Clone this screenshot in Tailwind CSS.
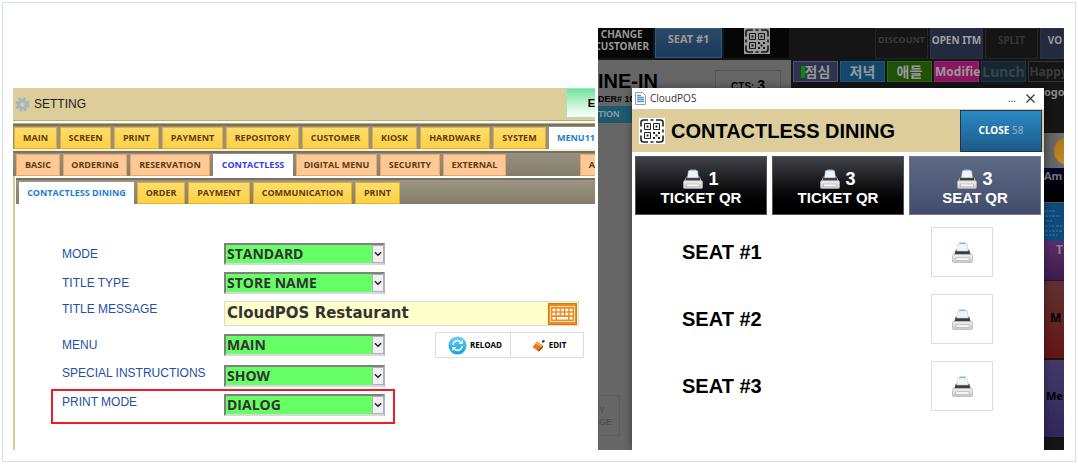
<!DOCTYPE html>
<html lang="en">
<head>
<meta charset="utf-8">
<title>CloudPOS Settings</title>
<script src="https://cdn.jsdelivr.net/npm/@tailwindcss/browser@4"></script>
</head>
<body class="bg-white p-0.5 font-['Liberation_Sans',sans-serif]">
<svg width="0" height="0" class="absolute" aria-hidden="true">
  <defs>
    <linearGradient id="pg" x1="0" y1="0" x2="0" y2="1"><stop offset="0" stop-color="#f2f2f2"/><stop offset="1" stop-color="#c8c8c8"/></linearGradient>
    <linearGradient id="rg" x1="0" y1="0" x2="0" y2="1"><stop offset="0" stop-color="#6fcbee"/><stop offset="1" stop-color="#12a3da"/></linearGradient>
    <symbol id="printer" viewBox="0 0 22 22">
      <path d="M8 .500h6l1.500 2.500h-9z" fill="#7fb6dc"/>
      <path d="M4 8h14l3 6H1z" fill="#d4d4d4"/>
      <path d="M4 8h14l1.300 5H2.700z" fill="#3c3c3c"/>
      <path d="M6 2h10l1 7.500H5z" fill="#eef4fa" stroke="#c3d0dc" stroke-width=".6"/>
      <rect x=".5" y="13" width="21" height="8.500" rx="1.500" fill="url(#pg)" stroke="#b0b0b0" stroke-width=".7"/>
      <rect x="4" y="16.500" width="14" height="3" fill="#f8f8f8" stroke="#b0b0b0" stroke-width=".7"/>
    </symbol>
    <symbol id="qr" viewBox="0 0 26 26">
      <rect width="26" height="26" fill="#fff"/>
      <g fill="none" stroke="#222" stroke-width="1.600">
        <path d="M2 8.500V4.500A2.500 2.500 0 0 1 4.500 2H9M11.500 2h3M17 2h4.500A2.500 2.500 0 0 1 24 4.500V8.500M24 11.500v3M24 17.500v4a2.500 2.500 0 0 1-2.500 2.500H17M14.500 24h-3M9 24H4.500A2.500 2.500 0 0 1 2 21.500V17.500M2 14.500v-3"/>
        <path d="M5.500 5.500h6v6h-6zM14.500 5.500h6v6h-6zM5.500 14.500h6v6h-6z" stroke-width="1"/>
      </g>
      <path d="M7.500 7.500h2v2h-2zM16.500 7.500h2v2h-2zM7.500 16.500h2v2h-2zM14 14h2v2h-2zM19 14h2v2h-2zM16.500 16.500h2v2h-2zM14 19h2v2h-2zM19 19h2v2h-2z" fill="#222"/>
    </symbol>
    <symbol id="chev" viewBox="0 0 9 6"><path d="M1 1l3.500 3.500L8 1" fill="none" stroke="#222" stroke-width="1.600"/></symbol>
  </defs>
</svg>
<main class="grid grid-cols-[582fr_466fr] items-end gap-[3px] border border-[#d5dfe8] pt-[25px] pr-[11px] pb-[11px] pl-[10px]">

  <!-- Settings panel -->
  <section class="overflow-hidden font-['Open_Sans',sans-serif]">
    <header class="flex h-[32px] items-start justify-between bg-[#dccd9a]">
      <h1 class="flex items-center gap-1 pt-2 pl-0.5 font-['Liberation_Sans',sans-serif] text-[12px] leading-4 text-[#222]">
        <svg class="size-[15px]" viewBox="0 0 16 16"><circle cx="8" cy="8" r="5" fill="#a9bcc4" stroke="#93a7b0"/><circle cx="8" cy="8" r="6.500" fill="none" stroke="#a3b6be" stroke-width="2.400" stroke-dasharray="3 2.100"/><circle cx="8" cy="8" r="2" fill="#dccd9a"/></svg>
        SETTING
      </h1>
      <button class="h-[30px] w-[29px] border border-r-0 border-[#9be8bd] bg-linear-to-b from-[#6fe29d] to-white text-right font-['Liberation_Sans',sans-serif] text-[11px] font-bold text-black">E</button>
    </header>
    <div class="h-1 border-y border-[#b5aa85] bg-[#fdfbf0]"></div>

    <nav class="flex h-[25px] gap-[3px] overflow-hidden border-t-2 border-[#77725f] bg-[#979080] pt-px pl-px text-[9px] font-bold text-[#5c3d0c] [&>button]:h-[22px] [&>button]:shrink-0 [&>button]:whitespace-nowrap">
      <button class="w-[43px] border border-[#e0b030] bg-linear-to-b from-[#fddc6c] to-[#fed143]">MAIN</button>
      <button class="w-[51px] border border-[#e0b030] bg-linear-to-b from-[#fddc6c] to-[#fed143]">SCREEN</button>
      <button class="w-[45px] border border-[#e0b030] bg-linear-to-b from-[#fddc6c] to-[#fed143]">PRINT</button>
      <button class="w-[61px] border border-[#e0b030] bg-linear-to-b from-[#fddc6c] to-[#fed143]">PAYMENT</button>
      <button class="w-[73px] border border-[#e0b030] bg-linear-to-b from-[#fddc6c] to-[#fed143]">REPOSITORY</button>
      <button class="w-[67px] border border-[#e0b030] bg-linear-to-b from-[#fddc6c] to-[#fed143]">CUSTOMER</button>
      <button class="w-[45px] border border-[#e0b030] bg-linear-to-b from-[#fddc6c] to-[#fed143]">KIOSK</button>
      <button class="w-[70px] border border-[#e0b030] bg-linear-to-b from-[#fddc6c] to-[#fed143]">HARDWARE</button>
      <button class="w-[53px] border border-[#e0b030] bg-linear-to-b from-[#fddc6c] to-[#fed143]">SYSTEM</button>
      <button class="min-w-0 flex-1 bg-white pl-2 text-left text-[#1c7fd0]">MENU11</button>
    </nav>
    <div class="h-0.5 bg-[#f3eed9]"></div>

    <nav class="flex h-[25px] gap-[3px] overflow-hidden border-t-2 border-[#77725f] bg-linear-to-b from-[#979080] to-[#857d6c] pt-px pl-[3px] text-[9px] font-bold text-[#5c3d0c] [&>button]:h-[22px] [&>button]:shrink-0 [&>button]:whitespace-nowrap">
      <button class="w-[44px] border border-[#e8a860] bg-[#ffc896]">BASIC</button>
      <button class="w-[64px] border border-[#e8a860] bg-[#ffc896]">ORDERING</button>
      <button class="w-[80px] border border-[#e8a860] bg-[#ffc896]">RESERVATION</button>
      <button class="w-[80px] bg-white text-[#3340f0]">CONTACTLESS</button>
      <button class="w-[81px] border border-[#e8a860] bg-[#ffc896]">DIGITAL MENU</button>
      <button class="w-[60px] border border-[#e8a860] bg-[#ffc896]">SECURITY</button>
      <button class="w-[63px] border border-[#e8a860] bg-[#ffc896]">EXTERNAL</button>
      <button class="ml-auto w-[15px] border border-r-0 border-[#e8a860] bg-[#ffc896] text-right">A</button>
    </nav>
    <div class="border-l-2 border-[#dccd9a] bg-white pt-0.5 pl-px">
      <nav class="flex h-[26px] gap-[3px] overflow-hidden border-t-2 border-[#77725f] bg-linear-to-b from-[#9c9584] to-[#857d6c] pt-0.5 pl-[3px] text-[9px] font-bold text-[#5c3d0c] [&>button]:h-[22px] [&>button]:shrink-0 [&>button]:whitespace-nowrap">
        <button class="w-[115px] bg-white text-[#1c7fd0]">CONTACTLESS DINING</button>
        <button class="w-[48px] border border-[#e0b030] bg-linear-to-b from-[#fddc6c] to-[#fed143]">ORDER</button>
        <button class="w-[62px] border border-[#e0b030] bg-linear-to-b from-[#fddc6c] to-[#fed143]">PAYMENT</button>
        <button class="w-[99px] border border-[#e0b030] bg-linear-to-b from-[#fddc6c] to-[#fed143]">COMMUNICATION</button>
        <button class="w-[45px] border border-[#e0b030] bg-linear-to-b from-[#fddc6c] to-[#fed143]">PRINT</button>
      </nav>

      <form class="flex flex-col pt-[39px] pb-[26px] pl-[35px] text-[14px] font-bold text-[#333] [&_label]:w-[162px] [&_label]:shrink-0 [&_label]:font-['Liberation_Sans',sans-serif] [&_label]:text-[12px] [&_label]:leading-4 [&_label]:font-normal [&_label]:text-[#2450a4] [&_select]:h-[22px] [&_select]:w-[161px] [&_select]:appearance-none [&_select]:border-2 [&_select]:border-t-[#808080] [&_select]:border-r-[#b4b4b4] [&_select]:border-b-[#d8d8d8] [&_select]:border-l-[#808080] [&_select]:bg-[#66ff66] [&_select]:pl-px [&_select]:leading-4 [&_select]:font-bold">
        <div class="flex items-center pl-[11px]">
          <label for="mode">MODE</label>
          <div class="relative flex"><select id="mode"><option>STANDARD</option></select><span class="pointer-events-none absolute inset-y-0.5 right-px flex w-3 items-center justify-center border border-[#b0b0b0] bg-[#f0f0f0]"><svg class="h-1.5 w-2 shrink-0"><use href="#chev"/></svg></span></div>
        </div>
        <div class="mt-[7px] flex items-center pl-[11px]">
          <label for="ttype">TITLE TYPE</label>
          <div class="relative flex"><select id="ttype"><option>STORE NAME</option></select><span class="pointer-events-none absolute inset-y-0.5 right-px flex w-3 items-center justify-center border border-[#b0b0b0] bg-[#f0f0f0]"><svg class="h-1.5 w-2 shrink-0"><use href="#chev"/></svg></span></div>
        </div>
        <div class="mt-[7px] flex pl-[11px]">
          <label for="tmsg">TITLE MESSAGE</label>
          <div class="flex h-[25px] w-[355px] items-center justify-between border border-[#dcdcd0] bg-[#ffffcc] pr-px">
            <input id="tmsg" value="CloudPOS Restaurant" class="min-w-0 flex-1 bg-transparent pl-0.5 font-['DejaVu_Sans',sans-serif] text-[15px] font-bold outline-none">
            <button type="button" aria-label="Keyboard" class="flex h-[22px] w-[29px] items-center justify-center border border-[#d9770f] bg-[#f08c1c]">
              <svg class="h-[16px] w-[25px]" viewBox="0 0 25 16" fill="none" stroke="#fff"><rect x=".5" y=".5" width="24" height="15" stroke="#fde3c4"/><path d="M2.500 4h20M2.500 8h20" stroke-width="2.600" stroke-dasharray="2.800 1.500"/><path d="M2.500 12.300h3M7 12.300h11M19.500 12.300h3" stroke-width="2.400"/></svg>
            </button>
          </div>
        </div>
        <div class="mt-[6px] flex items-center pl-[11px]">
          <label for="menu">MENU</label>
          <div class="relative flex"><select id="menu"><option>MAIN</option></select><span class="pointer-events-none absolute inset-y-0.5 right-px flex w-3 items-center justify-center border border-[#b0b0b0] bg-[#f0f0f0]"><svg class="h-1.5 w-2 shrink-0"><use href="#chev"/></svg></span></div>
          <button type="button" class="ml-[50px] flex h-[26px] w-[76px] items-center justify-center gap-[3px] border border-[#ddd] bg-white pl-1 text-[8px] font-bold text-black">
            <svg class="size-[19px]" viewBox="0 0 20 20"><circle cx="10" cy="10" r="9.500" fill="url(#rg)"/><path d="M5 9.500a5 5 0 0 1 8-3.500M15 10.500a5 5 0 0 1-8 3.500" fill="none" stroke="#e8f7fd" stroke-width="1.800"/><path d="M11 8.500h4.500V4zM9 11.500H4.500V16z" fill="#e8f7fd"/></svg>
            RELOAD
          </button>
          <button type="button" class="flex h-[26px] w-[73px] items-center justify-center gap-1 border border-l-0 border-[#ddd] bg-white pl-1 text-[8px] font-bold text-black">
            <svg class="size-[13px]" viewBox="0 0 13 13"><path d="M5 2.500l6 4-4.500 6L.500 8z" fill="#e87a1c"/><path d="M5 2.500l6 4-1.500 2-6-4z" fill="#f8a850"/><path d="M11 6.500v2L6.500 12.800V11z" fill="#8a3a10"/><path d="M9.500 2.500L12 .500l.8 2-2 1.500z" fill="#333"/></svg>
            EDIT
          </button>
        </div>
        <div class="mt-[7px] flex pl-[11px]">
          <label for="spec">SPECIAL INSTRUCTIONS</label>
          <div class="relative flex"><select id="spec"><option>SHOW</option></select><span class="pointer-events-none absolute inset-y-0.5 right-px flex w-3 items-center justify-center border border-[#b0b0b0] bg-[#f0f0f0]"><svg class="h-1.5 w-2 shrink-0"><use href="#chev"/></svg></span></div>
        </div>
        <div class="mt-0.5 flex w-[344px] border-2 border-[#ee1c25] pt-[3px] pb-[6px] pl-[9px]">
          <label for="pmode">PRINT MODE</label>
          <div class="relative flex"><select id="pmode"><option>DIALOG</option></select><span class="pointer-events-none absolute inset-y-0.5 right-px flex w-3 items-center justify-center border border-[#b0b0b0] bg-[#f0f0f0]"><svg class="h-1.5 w-2 shrink-0"><use href="#chev"/></svg></span></div>
        </div>
      </form>
    </div>
  </section>

  <!-- POS screen behind the dialog -->
  <section class="relative flex h-[422px] overflow-hidden bg-[#151515] font-['Noto_Sans',sans-serif] font-bold">
    <div class="flex w-[193px] shrink-0 flex-col">
      <div class="flex h-[32px] gap-0.5 text-[10px] leading-3 text-[#999]">
        <div class="flex h-[30px] w-[55px] justify-end bg-[#060606] pr-1 text-center"><span>CHANGE<br>CUSTOMER</span></div>
        <div class="flex h-[30px] w-[67px] items-center justify-center border border-[#2c5a88] bg-linear-to-b from-[#2c4a66] to-[#1a395c] pb-2 text-[11px]">SEAT #1</div>
        <div class="flex h-[30px] w-[65px] justify-center bg-[#060606]"><svg class="size-[26px] opacity-60"><use href="#qr"/></svg></div>
      </div>
      <div class="flex flex-1 flex-col bg-[#666] font-['Liberation_Sans',sans-serif] text-black">
        <div class="flex h-[46px] justify-between pt-[10px] pr-[10px]">
          <div><p class="text-[20px] leading-[22px]">INE-IN</p><p class="text-[9px] leading-[14px]">DER# 10</p></div>
          <div class="h-[36px] w-[66px] border border-[#555] pt-1.5 text-center text-[10px] leading-4">CTS: <span class="text-[14px]">3</span></div>
        </div>
        <div class="h-[17px] bg-[#1d5a70] text-[9px] leading-[17px] text-[#8a9aa0]">TION</div>
        <div class="mt-[272px] h-[41px] w-[22px] border border-[#5c5c5c] pt-2 text-[9px] leading-3 text-[#505050]">Y<br>GE</div>
      </div>
    </div>
    <div class="flex min-w-0 flex-1 flex-col">
      <div class="flex h-[32px] justify-end gap-0.5 text-[10px] leading-3 whitespace-nowrap [&>div]:flex [&>div]:h-[31px] [&>div]:shrink-0 [&>div]:justify-center [&>div]:border [&>div]:pt-[5px]">
        <div class="w-[53px] border-[#252528] text-[9px] text-[#3a3a3a]">DISCOUNT</div>
        <div class="w-[53px] border-[#2a3148] bg-[#232a3e] text-[#a0a0a0]">OPEN ITM</div>
        <div class="w-[53px] border-[#252528] text-[#353535]">SPLIT</div>
        <div class="w-[24px] border-[#2a3148] bg-[#232a3e] pl-1.5 text-[#999]">VO</div>
      </div>
      <div class="flex gap-0.5 overflow-hidden pt-px pl-0.5 font-['Noto_Sans','Noto_Sans_CJK_KR',sans-serif] text-[14px] leading-5 whitespace-nowrap text-[#999] [&>div]:h-[21px] [&>div]:w-[45px] [&>div]:shrink-0 [&>div]:border [&>div]:text-center">
        <div class="flex items-center justify-center border-[#4d5576] bg-[#2d3350]"><span class="h-3 w-1 bg-[#0a8a0a]"></span>점심</div>
        <div class="border-[#1a5a80] bg-[#14486a]">저녁</div>
        <div class="border-[#2a6a10] bg-[#1f5208]">애들</div>
        <div class="border-[#a02070] bg-[#8a1560] text-[12px]">Modifie</div>
        <div class="border-[#1c3544] bg-[#162630] text-[#344450]">Lunch</div>
        <div class="border-[#333] text-[12px] text-[#3a3a3a]"><span class="-ml-1">Happy</span></div>
      </div>
      <div class="ml-auto flex w-5 flex-1 flex-col overflow-hidden text-[12px] whitespace-nowrap text-black">
        <div class="h-[51px] text-[11px] leading-5 text-[#888]">ogo</div>
        <div class="h-[35px] bg-linear-to-r from-[#5c5c5c] to-[#707070] pt-1"><div class="ml-2.5 size-7 rounded-full bg-linear-to-br from-[#a8701a] to-[#d09a2a]"></div></div>
        <div class="h-[35px] border-b border-[#555] bg-linear-to-b from-[#060630] to-black text-[11px] text-[#777]">Am</div>
        <div class="h-[38px] bg-[#10497c] pt-1.5"><svg class="h-7 w-5" viewBox="0 0 20 28" stroke="#3f76a3" fill="none"><path d="M1 2h11M1 7h15M2 12h6M1 17h9M12 17h6M1 22h17M1 26h12" stroke-dasharray="3 1 2 1"/></svg></div>
        <div class="h-[40px] border-b border-[#2c1040] bg-linear-to-b from-[#5c2c68] to-[#3c1c4c] pl-3 text-[#888]">T</div>
        <div class="h-[77px] bg-linear-to-b from-[#5e3030] to-[#641414] pt-7 pl-1.5">M</div>
        <div class="mt-0.5 h-[77px] bg-linear-to-b from-[#433a66] to-[#32265c] pt-7 pl-0.5 text-[11px]">Me</div>
      </div>
    </div>

    <!-- Dialog window -->
    <div role="dialog" aria-label="CloudPOS" class="absolute top-[60px] right-5 bottom-0 left-[34px] bg-white font-['Liberation_Sans',sans-serif] text-black shadow-[0_0_8px_rgba(0,0,0,0.4)]">
      <div class="flex h-[21px] items-center gap-1 pr-[9px] pl-[3px] font-['Open_Sans',sans-serif] text-[10px] font-normal text-[#333]">
        <svg class="h-[13px] w-[11px]" viewBox="0 0 11 13"><path d="M.5.5h7l3 3v9H.5z" fill="#fff" stroke="#999"/><path d="M2 3.500h4M2 5.500h7M2 7.500h7M2 9.500h7" stroke="#5a9cd0" stroke-width="1.400"/></svg>
        CloudPOS
        <button aria-label="More" class="ml-auto">...</button>
        <button aria-label="Close window" class="ml-1.5"><svg class="size-[9px]" viewBox="0 0 9 9"><path d="M.5.5l8 8M8.500.5l-8 8" stroke="#333" stroke-width="1.100"/></svg></button>
      </div>
      <div class="flex h-[43px] items-center bg-[#dccd9a] pr-0.5 pl-[7px]">
        <svg class="size-[26px]"><use href="#qr"/></svg>
        <h2 class="ml-[6px] text-[20px]">CONTACTLESS DINING</h2>
        <button class="ml-auto h-[42px] w-[82px] border border-[#1c3850] bg-linear-to-b from-[#2b8bc4] to-[#1c5a88] font-['Noto_Sans',sans-serif] text-[10px] font-bold text-white">CLOSE <span class="font-normal text-[#8fb0c8]">58</span></button>
      </div>
      <div class="grid grid-cols-3 gap-[5px] px-[3px] pt-1 text-[15px] leading-[18px] font-bold text-white [&>button]:h-[59px] [&>button]:border [&>button]:pt-1 [&_span]:flex [&_span]:items-center [&_span]:justify-center [&_span]:gap-[5px] [&_span]:text-[18px] [&_svg]:size-5">
        <button class="border-[#50535c] bg-linear-to-b from-[#42434a] to-black"><span class="h-5"><svg><use href="#printer"/></svg>1</span>TICKET QR</button>
        <button class="border-[#50535c] bg-linear-to-b from-[#42434a] to-black"><span class="h-5"><svg><use href="#printer"/></svg>3</span>TICKET QR</button>
        <button class="border-[#727a90] bg-linear-to-b from-[#5e6984] to-[#414d6c]"><span class="h-5"><svg><use href="#printer"/></svg>3</span>SEAT QR</button>
      </div>
      <ul class="flex flex-col gap-[17px] pt-3 pr-[51px] pl-[50px] text-[20px] [&>li]:flex [&>li]:items-center [&>li]:justify-between [&_button]:flex [&_button]:h-[50px] [&_button]:w-[62px] [&_button]:items-center [&_button]:justify-center [&_button]:border [&_button]:border-[#ddd] [&_svg]:size-[21px]">
        <li>SEAT #1<button aria-label="Print seat 1"><svg><use href="#printer"/></svg></button></li>
        <li>SEAT #2<button aria-label="Print seat 2"><svg><use href="#printer"/></svg></button></li>
        <li>SEAT #3<button aria-label="Print seat 3"><svg><use href="#printer"/></svg></button></li>
      </ul>
    </div>
  </section>
</main>
</body>
</html>
